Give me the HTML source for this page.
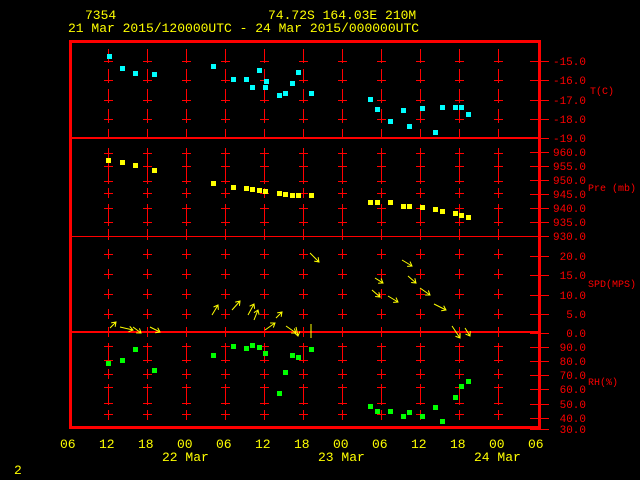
<!DOCTYPE html>
<html><head><meta charset="utf-8"><style>
html,body{margin:0;padding:0;background:#000;width:640px;height:480px;overflow:hidden}
svg{display:block}
text{font-family:"Liberation Mono",monospace}
</style></head><body>
<svg id="s" width="640" height="480" xmlns="http://www.w3.org/2000/svg">
<rect width="640" height="480" fill="#000"/>
<g fill="#ffff00" font-size="13">
<text x="85" y="19">7354</text>
<text x="268" y="19">74.72S  164.03E   210M</text>
<text x="68" y="32">21 Mar 2015/120000UTC - 24 Mar 2015/000000UTC</text>
</g>
<g id="grid" stroke="#ff0000" stroke-width="1" shape-rendering="crispEdges"></g>
<g shape-rendering="crispEdges">
<line x1="70" y1="236.5" x2="539" y2="236.5" stroke="#ff0000" stroke-width="1"/>
<line x1="70" y1="138" x2="539" y2="138" stroke="#ff0000" stroke-width="2"/>
<line x1="70" y1="332" x2="539" y2="332" stroke="#ff0000" stroke-width="2"/>
<rect x="70.5" y="41.5" width="469" height="386" fill="none" stroke="#ff0000" stroke-width="3"/>
</g>
<g id="lab" fill="#ff0000" font-size="11" text-anchor="end"></g>
<g fill="#ff0000" font-size="10">
<text x="590" y="94">T(C)</text>
<text x="588" y="191">Pre (mb)</text>
<text x="588" y="287">SPD(MPS)</text>
<text x="588" y="385">RH(%)</text>
</g>
<g id="pts" shape-rendering="crispEdges"></g>
<g id="arr" stroke="#ffff00" stroke-width="1" fill="none"></g>
<g fill="#ffff00" font-size="13">
<text x="60" y="448">06</text><text x="99" y="448">12</text><text x="138" y="448">18</text>
<text x="177" y="448">00</text><text x="216" y="448">06</text><text x="255" y="448">12</text>
<text x="294" y="448">18</text><text x="333" y="448">00</text><text x="372" y="448">06</text>
<text x="411" y="448">12</text><text x="450" y="448">18</text><text x="489" y="448">00</text>
<text x="528" y="448">06</text>
<text x="162" y="461">22 Mar</text><text x="318" y="461">23 Mar</text><text x="474" y="461">24 Mar</text>
<text x="14" y="474">2</text>
</g>
</svg>
<script>
var NS="http://www.w3.org/2000/svg";
function el(p,t,a){var e=document.createElementNS(NS,t);for(var k in a)e.setAttribute(k,a[k]);p.appendChild(e);return e;}
var g=document.getElementById('grid');
var cols=[108,147,186,225,264,303,342,381,420,459,498];
var ticks=[61,80,100,119,153,166,181,193,208,222,254,274,294,314,346,360,374,387,403,414];
var segs=[[49,63],[69,83],[89,103],[109,123],[129,137],[148,184],[188,198],[204,226],[229,240],[249,259],[269,279],[289,299],[309,319],[327,337],[343,363],[369,379],[384,405],[410,420]];
cols.forEach(function(x){
 ticks.forEach(function(y){el(g,'line',{x1:x-4,y1:y+0.5,x2:x+5,y2:y+0.5});});
 segs.forEach(function(s){el(g,'line',{x1:x+0.5,y1:s[0],x2:x+0.5,y2:s[1]});});
});
var labs=[[61,'-15.0'],[80,'-16.0'],[100,'-17.0'],[119,'-18.0'],[138,'-19.0'],
[152,'960.0'],[166,'955.0'],[180,'950.0'],[194,'945.0'],[208,'940.0'],[222,'935.0'],[236,'930.0'],
[256,'20.0'],[275,'15.0'],[295,'10.0'],[314,'5.0'],[333,'0.0'],
[347,'90.0'],[361,'80.0'],[375,'70.0'],[389,'60.0'],[404,'50.0'],[418,'40.0'],[429,'30.0']];
var L=document.getElementById('lab');
labs.forEach(function(l){
 var y=l[0];
 el(g,'line',{x1:530,y1:y+0.5,x2:549,y2:y+0.5});
 var t=el(L,'text',{x:586,y:y+4});t.textContent=l[1];
});
var P=document.getElementById('pts');
var T=[[109,56],[122,68],[135,73],[154,74],[213,66],[233,79],[246,79],[252,87],[259,70],[266,81],[265,87],[279,95],[285,93],[292,83],[298,72],[311,93],[370,99],[377,109],[390,121],[403,110],[409,126],[422,108],[435,132],[442,107],[455,107],[461,107],[468,114]];
var Pr=[[108,160],[122,162],[135,165],[154,170],[213,183],[233,187],[246,188],[252,189],[259,190],[265,191],[279,193],[285,194],[292,195],[298,195],[311,195],[370,202],[377,202],[390,202],[403,206],[409,206],[422,207],[435,209],[442,211],[455,213],[461,215],[468,217]];
var R=[[108,363],[122,360],[135,349],[154,370],[213,355],[233,346],[246,348],[252,345],[259,347],[265,353],[279,393],[285,372],[292,355],[298,357],[311,349],[370,406],[377,411],[390,411],[403,416],[409,412],[422,416],[435,407],[442,421],[455,397],[461,386],[468,381]];
function sq(a,c){a.forEach(function(p){el(P,'rect',{x:p[0]-2,y:p[1]-2,width:5,height:5,fill:c});});}
sq(T,'#00ffff');sq(Pr,'#ffff00');sq(R,'#00ff00');
var A=document.getElementById('arr');
var W=[[110,328,116,322],[120,327,133,330],[133,327,141,333],[150,327,160,332],[212,315,218,305],[232,310,240,301],[248,315,254,304],[254,320,258,310],[265,330,275,323],[276,318,282,312],[286,326,296,333],[296,327,298,336],[310,253,319,262],[375,278,383,283],[372,290,380,297],[388,296,398,302],[402,260,412,266],[408,276,416,283],[420,288,430,295],[434,304,446,310],[452,326,460,338],[465,328,470,336]];
W.forEach(function(w){
 var dx=w[2]-w[0],dy=w[3]-w[1],l=Math.sqrt(dx*dx+dy*dy),ux=dx/l,uy=dy/l;
 var h=4;
 var ax=w[2]-ux*h-uy*h*0.7,ay=w[3]-uy*h+ux*h*0.7,bx=w[2]-ux*h+uy*h*0.7,by=w[3]-uy*h-ux*h*0.7;
 el(A,'path',{d:'M'+w[0]+' '+w[1]+'L'+w[2]+' '+w[3]+'M'+ax+' '+ay+'L'+w[2]+' '+w[3]+'L'+bx+' '+by});
});
el(A,'line',{x1:311,y1:324,x2:311,y2:338});
</script>
</body></html>
